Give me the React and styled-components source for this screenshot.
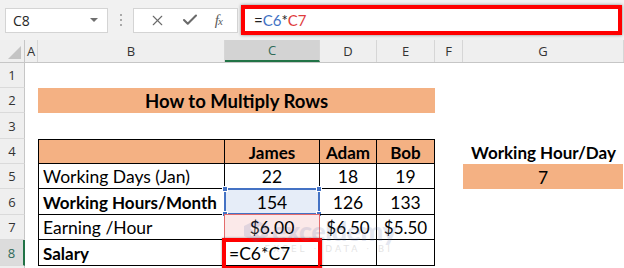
import React from "react";
import styled, { createGlobalStyle, css } from "styled-components";
import { X, Check } from "lucide-react";

const GlobalStyle = createGlobalStyle`
  * { box-sizing: border-box; }
  body {
    margin: 0;
    background: #fff;
    overflow: hidden;
    font-family: "Lato", "Liberation Sans", sans-serif;
  }
`;

const ORANGE = "#f4b183";
const W = { head: 25, A: 13, B: 187, C: 95, D: 57, E: 58, F: 28, G: 161 };

const Window = styled.div`
  position: relative;
  width: 624px;
  height: 268px;
  overflow: hidden;
  background: #fff;
`;

const Toolbar = styled.div`
  height: 40px;
  display: flex;
  align-items: center;
  padding-left: 5px;
  background: #f1f1f1;
`;

const NameBox = styled.div`
  width: 103px;
  height: 25px;
  display: flex;
  align-items: center;
  justify-content: space-between;
  padding: 0 9px 0 7px;
  background: #fff;
  border: 1px solid #d4d4d4;
  font-family: "Open Sans", sans-serif;
  font-size: 14px;
  color: #262626;
`;

const Caret = styled.span`
  width: 0;
  height: 0;
  border-left: 4px solid transparent;
  border-right: 4px solid transparent;
  border-top: 4px solid #6f6f6f;
`;

const Dots = styled.div`
  width: 25px;
  display: flex;
  flex-direction: column;
  align-items: center;
  gap: 3px;
  span {
    width: 2px;
    height: 2px;
    background: #a9a9a9;
  }
`;

const FnBox = styled.div`
  width: 105px;
  height: 25px;
  display: flex;
  align-items: center;
  justify-content: space-evenly;
  background: #fff;
  border: 1px solid #d4d4d4;
  color: #6a6a6a;
`;

const Fx = styled.span`
  font-family: "Liberation Serif", serif;
  font-style: italic;
  font-size: 15px;
  color: #5c5c5c;
  letter-spacing: -1px;
  sub {
    font-size: 11px;
    vertical-align: baseline;
  }
`;

const FormulaBox = styled.div`
  margin-left: 3px;
  width: 381px;
  height: 30px;
  display: flex;
  align-items: center;
  padding-left: 9px;
  background: #fff;
  border: 4px solid #f00;
  box-shadow: 0 0 3px rgba(0, 0, 0, 0.45);
  font-size: 15px;
  color: #222;
`;

const Ref = styled.span`
  color: ${(p) => p.$color};
`;

const HeaderRow = styled.div`
  display: flex;
  height: 23px;
  background: #efefef;
  border-bottom: 1px solid #c6c6c6;
`;

const Corner = styled.div`
  position: relative;
  width: ${W.head}px;
  border-right: 1px solid #c6c6c6;
  &::after {
    content: "";
    position: absolute;
    right: 3px;
    bottom: 3px;
    border-left: 13px solid transparent;
    border-bottom: 13px solid #c4c4c4;
  }
`;

const ColHead = styled.div`
  width: ${(p) => p.$w}px;
  display: flex;
  align-items: center;
  justify-content: center;
  border-right: 1px solid #d6d6d6;
  font-family: "Open Sans", sans-serif;
  font-size: 13px;
  color: #333;
  ${(p) =>
    p.$active &&
    css`
      background: #d3d3d3;
      color: #2f6a58;
      border-bottom: 2px solid #217346;
    `}
`;

const Row = styled.div`
  display: flex;
  height: ${(p) => p.$h}px;
`;

const RowHead = styled.div`
  width: ${W.head}px;
  flex-shrink: 0;
  display: flex;
  align-items: center;
  justify-content: center;
  background: #efefef;
  border-right: 1px solid #c6c6c6;
  border-bottom: 1px solid #dadada;
  font-family: "Open Sans", sans-serif;
  font-size: 13px;
  color: #333;
  ${(p) =>
    p.$active &&
    css`
      background: #dcdcdc;
      color: #2f6a58;
      border-right: 2px solid #217346;
    `}
`;

const Cell = styled.div`
  position: relative;
  width: ${(p) => p.$w}px;
  flex-shrink: 0;
  display: flex;
  align-items: center;
  justify-content: ${(p) =>
    p.$align === "left" ? "flex-start" : "center"};
  padding: ${(p) => (p.$align === "left" ? "1px 0 0 4px" : "1px 0 0")};
  background: ${(p) => p.$fill || "transparent"};
  font-size: ${(p) => (p.$size ? p.$size : p.$bold ? 17 : 17.5)}px;
  font-weight: ${(p) => (p.$bold ? 700 : 400)};
  color: #000;
  white-space: nowrap;
  ${(p) =>
    p.$box &&
    css`
      border-right: 1px solid #000;
      border-bottom: 1px solid #000;
    `}
  ${(p) => p.$top && "border-top: 1px solid #000;"}
  ${(p) => p.$left && "border-left: 1px solid #000;"}
`;

const RefBorder = styled.div`
  position: absolute;
  inset: -1px -1px -1px -1px;
  border: ${(p) => (p.$blue ? "2px solid #4472c4" : "1px solid #e46c6c")};
  pointer-events: none;
`;

const Handle = styled.span`
  position: absolute;
  width: 6px;
  height: 6px;
  background: #4472c4;
  border: 1px solid #fff;
  ${(p) => (p.$t ? "top: -4px;" : "bottom: -4px;")}
  ${(p) => (p.$l ? "left: -4px;" : "right: -4px;")}
`;

const Callout = styled.div`
  position: absolute;
  left: -3px;
  right: -3px;
  top: -2px;
  height: 32px;
  border: 4px solid #f00;
  box-shadow: 0 0 2px rgba(0, 0, 0, 0.4);
  pointer-events: none;
`;

const Watermark = styled.div`
  position: absolute;
  left: 243px;
  top: 218px;
  display: flex;
  flex-direction: column;
  align-items: center;
  opacity: 0.16;
  pointer-events: none;
  color: #5b6fa6;
  .logo {
    display: flex;
    align-items: center;
    gap: 3px;
    font-family: "Lato", sans-serif;
    font-weight: 900;
    font-size: 27px;
    line-height: 26px;
    letter-spacing: -0.5px;
  }
  .tag {
    font-family: "DejaVu Sans", sans-serif;
    font-size: 9px;
    letter-spacing: 3px;
    color: #555;
    margin-left: 18px;
  }
`;

function Spacer({ w }) {
  return <Cell $w={w} />;
}

export default function App() {
  return (
    <Window>
      <GlobalStyle />
      <Toolbar>
        <NameBox>
          C8
          <Caret />
        </NameBox>
        <Dots>
          <span />
          <span />
          <span />
        </Dots>
        <FnBox>
          <X size={17} strokeWidth={1.6} />
          <Check size={18} strokeWidth={2.8} />
          <Fx>
            f<sub>x</sub>
          </Fx>
        </FnBox>
        <FormulaBox>
          =<Ref $color="#3f72c4">C6</Ref>*<Ref $color="#e03c3c">C7</Ref>
        </FormulaBox>
      </Toolbar>

      <HeaderRow>
        <Corner />
        <ColHead $w={W.A}>A</ColHead>
        <ColHead $w={W.B}>B</ColHead>
        <ColHead $w={W.C} $active>
          C
        </ColHead>
        <ColHead $w={W.D}>D</ColHead>
        <ColHead $w={W.E}>E</ColHead>
        <ColHead $w={W.F}>F</ColHead>
        <ColHead $w={W.G}>G</ColHead>
      </HeaderRow>

      <Row $h={25}>
        <RowHead>1</RowHead>
      </Row>

      <Row $h={25}>
        <RowHead>2</RowHead>
        <Spacer w={W.A} />
        <Cell $w={W.B + W.C + W.D + W.E} $fill={ORANGE} $bold $size={18.5}>
          How to Multiply Rows
        </Cell>
      </Row>

      <Row $h={26}>
        <RowHead>3</RowHead>
      </Row>

      <Row $h={25}>
        <RowHead>4</RowHead>
        <Spacer w={W.A} />
        <Cell $w={W.B} $fill={ORANGE} $box $top $left />
        <Cell $w={W.C} $fill={ORANGE} $box $top $bold>
          James
        </Cell>
        <Cell $w={W.D} $fill={ORANGE} $box $top $bold>
          Adam
        </Cell>
        <Cell $w={W.E} $fill={ORANGE} $box $top $bold>
          Bob
        </Cell>
        <Spacer w={W.F} />
        <Cell $w={W.G} $bold>
          Working Hour/Day
        </Cell>
      </Row>

      <Row $h={25}>
        <RowHead>5</RowHead>
        <Spacer w={W.A} />
        <Cell $w={W.B} $box $left $align="left">
          Working Days (Jan)
        </Cell>
        <Cell $w={W.C} $box>
          22
        </Cell>
        <Cell $w={W.D} $box>
          18
        </Cell>
        <Cell $w={W.E} $box>
          19
        </Cell>
        <Spacer w={W.F} />
        <Cell $w={W.G - 1} $fill={ORANGE}>
          7
        </Cell>
      </Row>

      <Row $h={26}>
        <RowHead>6</RowHead>
        <Spacer w={W.A} />
        <Cell $w={W.B} $box $left $align="left" $bold>
          Working Hours/Month
        </Cell>
        <Cell $w={W.C} $box $fill="#e6edf8">
          154
          <RefBorder $blue>
            <Handle $t $l />
            <Handle $t />
            <Handle $l />
            <Handle />
          </RefBorder>
        </Cell>
        <Cell $w={W.D} $box>
          126
        </Cell>
        <Cell $w={W.E} $box>
          133
        </Cell>
      </Row>

      <Row $h={25}>
        <RowHead>7</RowHead>
        <Spacer w={W.A} />
        <Cell $w={W.B} $box $left $align="left">
          Earning /Hour
        </Cell>
        <Cell $w={W.C} $box $fill="#fbe9e9">
          $6.00
          <RefBorder />
        </Cell>
        <Cell $w={W.D} $box $size={17}>
          $6.50
        </Cell>
        <Cell $w={W.E} $box $size={17}>
          $5.50
        </Cell>
      </Row>

      <Row $h={26}>
        <RowHead $active>8</RowHead>
        <Spacer w={W.A} />
        <Cell $w={W.B} $box $left $align="left" $bold>
          Salary
        </Cell>
        <Cell $w={W.C} $box $align="left">
          =C6*C7
          <Callout />
        </Cell>
        <Cell $w={W.D} $box />
        <Cell $w={W.E} $box />
      </Row>

      <Row $h={10}>
        <RowHead />
      </Row>

      <Watermark>
        <div className="logo">
          <svg width="26" height="24" viewBox="0 0 26 24">
            <path d="M13 1 L25 7 L25 17 L13 23 L1 17 L1 7 Z" fill="#5b6fa6" />
            <path d="M8 8 L18 16 M18 8 L8 16" stroke="#fff" strokeWidth="3" />
          </svg>
          exceldemy
        </div>
        <div className="tag">EXCEL · DATA · BI</div>
      </Watermark>
    </Window>
  );
}
